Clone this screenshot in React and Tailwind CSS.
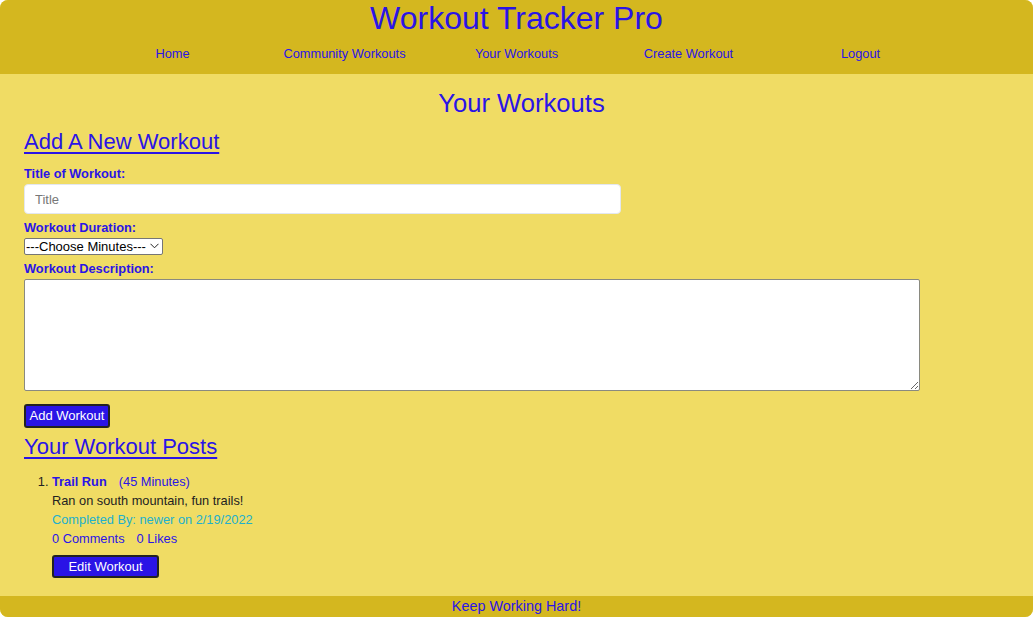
import React from 'react';

const navLinks = ["Home", "Community Workouts", "Your Workouts", "Create Workout", "Logout"];

const App = () => {
    return (
        <div className="bg-white" style={{ fontFamily: '"Liberation Sans", Arial, sans-serif' }}>
            <div className="rounded-lg overflow-hidden bg-[#f0dc64] text-[#2a14e6]">
                <header className="bg-[#d4b71f] h-[74px]">
                    <h1 className="text-[32px] leading-[37px] text-center">Workout Tracker Pro</h1>
                    <nav className="mt-[9px] mx-auto w-[860px] grid grid-cols-5 text-[12.8px] leading-[16px] text-center">
                        {navLinks.map((link) => (
                            <a key={link} href="#">{link}</a>
                        ))}
                    </nav>
                </header>

                <main className="pl-[24px] pr-[14px] pt-[15px] pb-[18px]">
                    <h2 className="text-[25.6px] leading-[28px] text-center">Your Workouts</h2>

                    <h3 className="mt-[12px] text-[22px] leading-[26px] underline underline-offset-[3px] w-fit">Add A New Workout</h3>
                    <form>
                        <label className="block mt-[12px] text-[12.8px] leading-[14px] font-bold">Title of Workout:</label>
                        <input
                            type="text"
                            placeholder="Title"
                            className="block mt-[3px] w-[597px] h-[30px] bg-white rounded-[4px] border border-[#e3e7ef] px-[10px] text-[13px] placeholder:text-[#777] outline-none"
                        />
                        <label className="block mt-[7px] text-[12.8px] leading-[14px] font-bold">Workout Duration:</label>
                        <div className="relative mt-[3px] w-[139px]">
                            <select className="block appearance-none w-[139px] h-[17px] bg-white border border-[#767676] rounded-[2px] text-[13px] leading-[15px] text-black pl-[1px] pr-[14px]">
                                <option>---Choose Minutes---</option>
                            </select>
                            <svg className="absolute right-[4px] top-[5px] pointer-events-none" width="9" height="6" viewBox="0 0 9 6" fill="none">
                                <path d="M0.5 0.8 L4.5 4.8 L8.5 0.8" stroke="#222" strokeWidth="1" />
                            </svg>
                        </div>
                        <label className="block mt-[7px] text-[12.8px] leading-[14px] font-bold">Workout Description:</label>
                        <textarea className="block mt-[3px] w-[896px] h-[112px] bg-white border border-[#8a8a80] rounded-[2px] outline-none"></textarea>
                        <button
                            type="button"
                            className="block mt-[13px] w-[86px] h-[24px] bg-[#2a14e6] text-white text-[13px] border-2 border-[#222] rounded-[3px]"
                        >
                            Add Workout
                        </button>
                    </form>

                    <h3 className="mt-[6px] text-[22px] leading-[26px] underline underline-offset-[3px] w-fit">Your Workout Posts</h3>
                    <ol className="mt-[11px] list-decimal pl-[28px] text-[12.8px] leading-[19px]">
                        <li className="marker:text-[#222]">
                            <div className="pt-[1px]">
                                <span className="font-bold">Trail Run</span>
                                <span className="ml-[12px]">(45 Minutes)</span>
                            </div>
                            <div className="text-[#222]">Ran on south mountain, fun trails!</div>
                            <div className="text-[#22b0cc]">Completed By: newer on 2/19/2022</div>
                            <div>
                                <span>0 Comments</span>
                                <span className="ml-[12px]">0 Likes</span>
                            </div>
                            <button
                                type="button"
                                className="block mt-[7px] w-[107px] h-[23px] bg-[#2a14e6] text-white text-[13px] border-2 border-[#222] rounded-[3px]"
                            >
                                Edit Workout
                            </button>
                        </li>
                    </ol>
                </main>

                <footer className="bg-[#d4b71f] h-[21px] text-[14.4px] leading-[21px] text-center">Keep Working Hard!</footer>
            </div>
        </div>
    );
};

export default App;
